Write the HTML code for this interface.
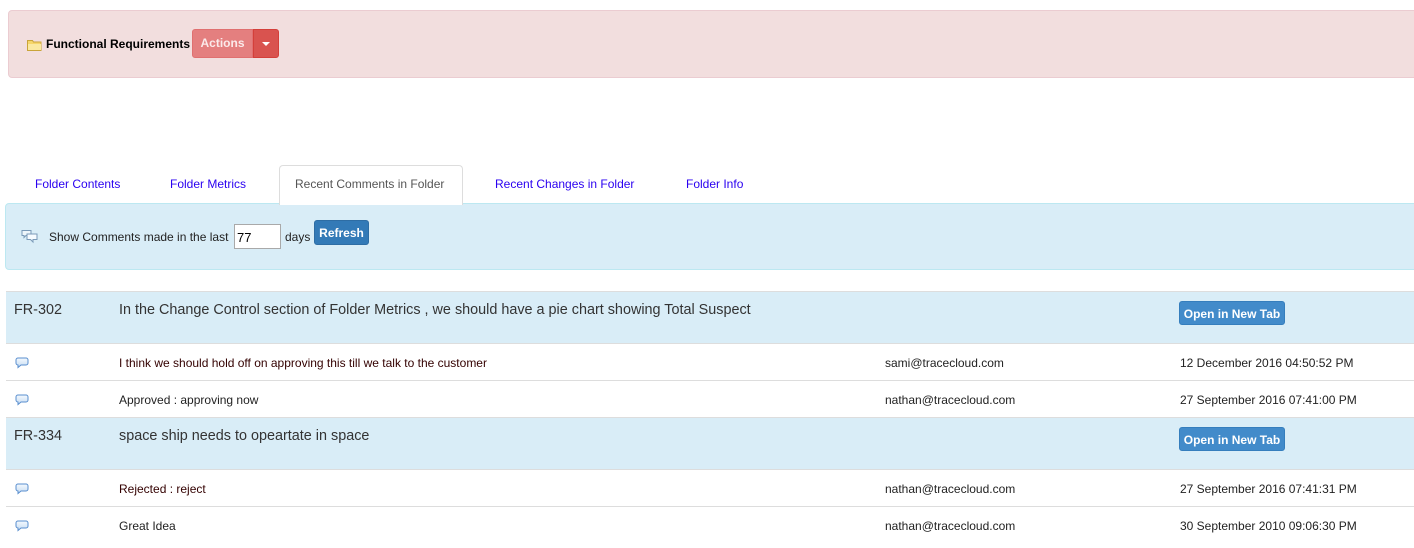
<!DOCTYPE html>
<html><head><meta charset="utf-8"><style>
body{margin:0;width:1414px;height:548px;overflow:hidden;background:#fff;font-family:"Liberation Sans",Arial,sans-serif;position:relative}
.a{position:absolute;white-space:nowrap}
.t12{font-size:12px;color:#222}
.tab{font-size:12px;color:#2a00f0;top:177px}
.row{position:absolute;left:6px;width:1408px;border-top:1px solid #ddd}
.grp{background:#d9edf7;height:51px}
.cm{height:36px}
.btn{position:absolute;background:#428bca;border:1px solid #357ebd;border-radius:3px;color:#fff;font-size:12px;font-weight:bold;text-align:center}
.ttl{font-size:14.4px;color:#333}
</style></head><body>
<div class="a" style="left:8px;top:10px;width:1420px;height:66px;background:#f2dede;border:1px solid #ebccd1;border-radius:4px"></div>
<svg class="a" style="left:27px;top:39px" width="15" height="12" viewBox="0 0 15 12"><path d="M0.5 1.5h5l1 1.5h7.5v8.5h-13.5z" fill="#f6d66a" stroke="#c9a43a"/><path d="M1 5h13v6H1z" fill="#fbe9a0"/></svg>
<div class="a" style="left:46px;top:37px;font-size:12px;font-weight:bold;color:#000">Functional Requirements</div>
<div class="a" style="left:192px;top:29px;width:61px;height:29px;background:#e47f7f;border:1px solid #e07070;border-radius:3px 0 0 3px;box-sizing:border-box;color:#fbeaea;font-size:12px;font-weight:bold;text-align:center;line-height:27px">Actions</div>
<div class="a" style="left:253px;top:29px;width:26px;height:29px;background:#d9534f;border:1px solid #d43f3a;border-radius:0 3px 3px 0;box-sizing:border-box"><svg style="position:absolute;left:8px;top:12px" width="8" height="4"><path d="M0 0h8L4 4z" fill="#fff"/></svg></div>

<div class="a tab" style="left:35px">Folder Contents</div>
<div class="a tab" style="left:170px">Folder Metrics</div>
<div class="a" style="left:279px;top:165px;width:184px;height:40px;border:1px solid #ddd;border-bottom:none;border-radius:4px 4px 0 0;background:#fff;box-sizing:border-box;z-index:2"></div>
<div class="a" style="left:295px;top:177px;font-size:12px;color:#555;z-index:3">Recent Comments in Folder</div>
<div class="a tab" style="left:495px">Recent Changes in Folder</div>
<div class="a tab" style="left:686px">Folder Info</div>

<div class="a" style="left:5px;top:203px;width:1420px;height:67px;background:#d9edf7;border:1px solid #bce8f1;border-radius:4px;box-sizing:border-box"></div>
<svg class="a" style="left:21px;top:229px" width="17" height="15" viewBox="0 0 17 15"><path d="M1 1.5h9v5h-5l-2 2v-2H1z" fill="#eef6fb" stroke="#7a9ab8"/><path d="M6 5h10v5.5h-4v2.5l-2.5-2.5H6z" fill="#f6fbff" stroke="#7a9ab8"/></svg>
<div class="a t12" style="left:49px;top:230px">Show Comments made in the last</div>
<div class="a" style="left:234px;top:224px;width:47px;height:25px;border:1px solid #a9a9a9;background:#fff;box-sizing:border-box;font-size:13px;padding:5px 0 0 2px;color:#000">77</div>
<div class="a t12" style="left:285px;top:230px">days</div>
<div class="btn" style="left:314px;top:220px;width:55px;height:25px;line-height:25px;background:#337ab7;border-color:#2e6da4;box-sizing:border-box">Refresh</div>

<div class="row grp" style="top:291px"></div>
<div class="a ttl" style="left:14px;top:302px">FR-302</div>
<div class="a ttl" style="left:119px;top:302px">In the Change Control section of Folder Metrics , we should have a pie chart showing Total Suspect</div>
<div class="btn" style="left:1179px;top:301px;width:106px;height:24px;line-height:24px;box-sizing:border-box">Open in New Tab</div>

<div class="row cm" style="top:343px"></div>
<div class="a t12" style="left:119px;top:356px;color:#300">I think we should hold off on approving this till we talk to the customer</div>
<div class="a t12" style="left:885px;top:356px">sami@tracecloud.com</div>
<div class="a t12" style="left:1180px;top:356px">12 December 2016 04:50:52 PM</div>

<div class="row cm" style="top:380px"></div>
<div class="a t12" style="left:119px;top:393px">Approved : approving now</div>
<div class="a t12" style="left:885px;top:393px">nathan@tracecloud.com</div>
<div class="a t12" style="left:1180px;top:393px">27 September 2016 07:41:00 PM</div>

<div class="row grp" style="top:417px"></div>
<div class="a ttl" style="left:14px;top:428px">FR-334</div>
<div class="a ttl" style="left:119px;top:428px">space ship needs to opeartate in space</div>
<div class="btn" style="left:1179px;top:427px;width:106px;height:24px;line-height:24px;box-sizing:border-box">Open in New Tab</div>

<div class="row cm" style="top:469px"></div>
<div class="a t12" style="left:119px;top:482px;color:#300">Rejected : reject</div>
<div class="a t12" style="left:885px;top:482px">nathan@tracecloud.com</div>
<div class="a t12" style="left:1180px;top:482px">27 September 2016 07:41:31 PM</div>

<div class="row cm" style="top:506px"></div>
<div class="a t12" style="left:119px;top:519px">Great Idea</div>
<div class="a t12" style="left:885px;top:519px">nathan@tracecloud.com</div>
<div class="a t12" style="left:1180px;top:519px">30 September 2010 09:06:30 PM</div>

<svg width="0" height="0" style="position:absolute"><defs><linearGradient id="g" x1="0" y1="0" x2="0" y2="1"><stop offset="0" stop-color="#f4f9fe"/><stop offset="1" stop-color="#c6dcf2"/></linearGradient></defs></svg>
<svg class="a" style="left:15px;top:357px" width="14" height="12" viewBox="0 0 14 12"><path d="M3 1h8a2 2 0 0 1 2 2v3a2 2 0 0 1-2 2H6l-3 2.5V8A2 2 0 0 1 1 6V3a2 2 0 0 1 2-2z" fill="url(#g)" stroke="#5a8fcf"/></svg>
<svg class="a" style="left:15px;top:394px" width="14" height="12" viewBox="0 0 14 12"><path d="M3 1h8a2 2 0 0 1 2 2v3a2 2 0 0 1-2 2H6l-3 2.5V8A2 2 0 0 1 1 6V3a2 2 0 0 1 2-2z" fill="url(#g)" stroke="#5a8fcf"/></svg>
<svg class="a" style="left:15px;top:483px" width="14" height="12" viewBox="0 0 14 12"><path d="M3 1h8a2 2 0 0 1 2 2v3a2 2 0 0 1-2 2H6l-3 2.5V8A2 2 0 0 1 1 6V3a2 2 0 0 1 2-2z" fill="url(#g)" stroke="#5a8fcf"/></svg>
<svg class="a" style="left:15px;top:520px" width="14" height="12" viewBox="0 0 14 12"><path d="M3 1h8a2 2 0 0 1 2 2v3a2 2 0 0 1-2 2H6l-3 2.5V8A2 2 0 0 1 1 6V3a2 2 0 0 1 2-2z" fill="url(#g)" stroke="#5a8fcf"/></svg>
</body></html>
